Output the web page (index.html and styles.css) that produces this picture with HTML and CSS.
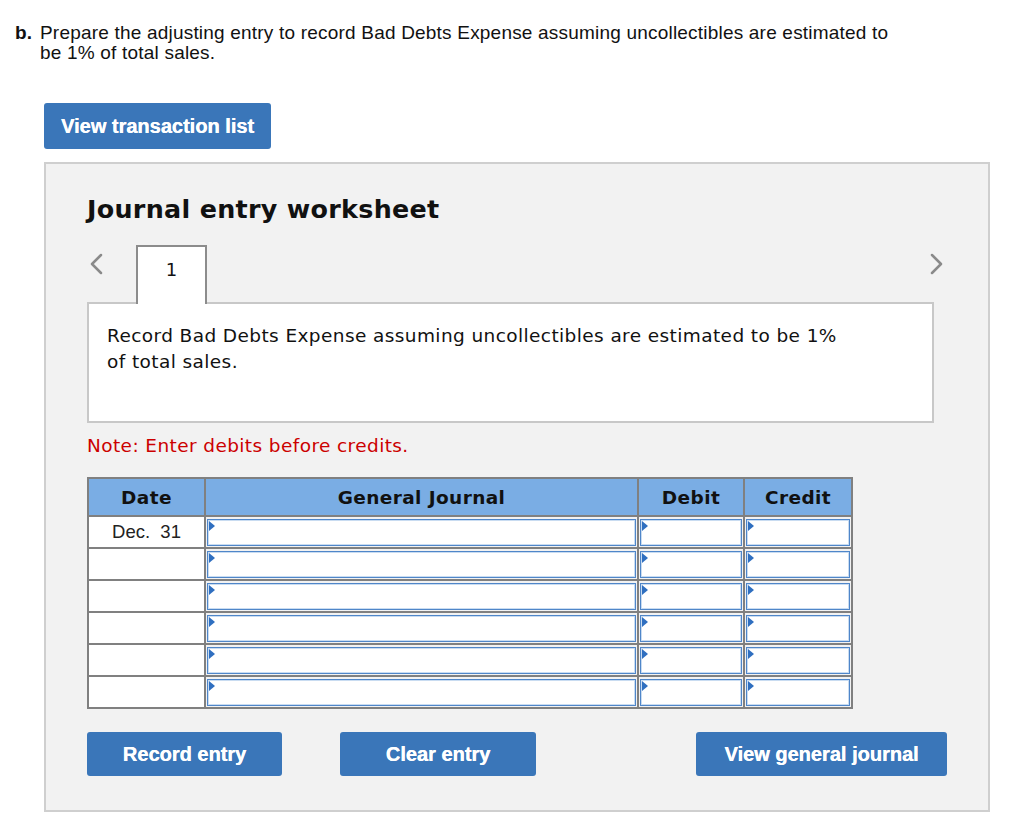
FILE: index.html
```html
<!DOCTYPE html>
<html lang="en">
<head>
    <meta charset="UTF-8">
    <meta name="viewport" content="width=device-width, initial-scale=1.0">
    <title>Journal entry worksheet</title>
    <link rel="stylesheet" href="styles.css">
</head>
<body>
    <div class="question">
        <span class="label">b.</span>
        <p>Prepare the adjusting entry to record Bad Debts Expense assuming uncollectibles are estimated to be 1% of total sales.</p>
    </div>

    <button class="btn btn-top">View transaction list</button>

    <div class="worksheet">
        <h2>Journal entry worksheet</h2>

        <div class="tabs">
            <span class="arrow">
                <svg width="16" height="22" viewBox="0 0 16 22"><path d="M13 2 L4 11 L13 20" fill="none" stroke="#8a8a8a" stroke-width="2.5" stroke-linecap="round" stroke-linejoin="round"/></svg>
            </span>
            <div class="tab">1</div>
            <span class="arrow arrow-right">
                <svg width="16" height="22" viewBox="0 0 16 22"><path d="M3 2 L12 11 L3 20" fill="none" stroke="#8a8a8a" stroke-width="2.5" stroke-linecap="round" stroke-linejoin="round"/></svg>
            </span>
        </div>

        <div class="instructions">
            Record Bad Debts Expense assuming uncollectibles are estimated to be 1%<br>of total sales.
        </div>

        <p class="note">Note: Enter debits before credits.</p>

        <table class="journal">
            <thead>
                <tr>
                    <th class="col-date">Date</th>
                    <th class="col-desc">General Journal</th>
                    <th class="col-amt">Debit</th>
                    <th class="col-amt2">Credit</th>
                </tr>
            </thead>
            <tbody id="rows"></tbody>
        </table>

        <div class="actions">
            <button class="btn btn-record">Record entry</button>
            <button class="btn btn-clear">Clear entry</button>
            <button class="btn btn-view">View general journal</button>
        </div>
    </div>

    <script>
        const rows = document.getElementById('rows');
        for (let i = 0; i < 6; i++) {
            const tr = document.createElement('tr');
            tr.innerHTML =
                '<td class="date">' + (i === 0 ? 'Dec.&nbsp; 31' : '') + '</td>' +
                '<td class="cell"><div class="field"></div></td>' +
                '<td class="cell"><div class="field"></div></td>' +
                '<td class="cell"><div class="field"></div></td>';
            rows.appendChild(tr);
        }
    </script>
</body>
</html>
```

FILE: styles.css
```css
body {
    margin: 0;
    padding: 0;
    background-color: #fff;
    font-family: "Liberation Sans", Arial, sans-serif;
    color: #111;
}
.question {
    display: flex;
    padding: 23px 0 0 15px;
    font-size: 19px;
    letter-spacing: 0.2px;
    line-height: 20px;
    width: 890px;
}
.question .label {
    font-weight: bold;
    width: 25px;
    flex-shrink: 0;
}
.question p {
    margin: 0;
}
.btn {
    background-color: #3a76b9;
    color: #fff;
    border: none;
    border-radius: 3px;
    font-family: "Liberation Sans", Arial, sans-serif;
    font-weight: bold;
    font-size: 20px;
    text-shadow: 0.3px 0 0 #fff;
    cursor: pointer;
    padding: 0;
}
.btn-top {
    display: block;
    margin: 40px 0 0 44px;
    width: 227px;
    height: 46px;
}
.worksheet {
    margin: 13px 0 0 44px;
    width: 946px;
    height: 650px;
    background-color: #f2f2f2;
    border: 2px solid #cfcfcf;
    padding: 0 0 0 41px;
    box-sizing: border-box;
    font-family: "DejaVu Sans", Verdana, sans-serif;
}
.worksheet h2 {
    margin: 0;
    padding-top: 30px;
    font-size: 25.4px;
    line-height: 30px;
    letter-spacing: 0.3px;
    color: #111;
}
.tabs {
    display: flex;
    align-items: flex-start;
    margin-top: 21px;
    width: 847px;
}
.arrow {
    margin: 8px 0 0 1px;
    width: 48px;
}
.arrow-right {
    margin-left: auto;
    width: auto;
    margin-right: -11px;
}
.tab {
    width: 71px;
    height: 59px;
    background-color: #fff;
    border: 2px solid #8c8c8c;
    border-bottom: none;
    box-sizing: border-box;
    text-align: center;
    font-size: 18px;
    padding-top: 12px;
    position: relative;
    z-index: 1;
    margin-bottom: -2px;
}
.instructions {
    width: 847px;
    height: 121px;
    box-sizing: border-box;
    background-color: #fff;
    border: 2px solid #c8c8c8;
    padding: 19px 18px;
    font-size: 18.5px;
    letter-spacing: 0.4px;
    line-height: 26px;
    color: #111;
}
.note {
    margin: 12px 0 0 0;
    color: #c00;
    font-size: 18.5px;
    letter-spacing: 0.4px;
    line-height: 22px;
}
.journal {
    margin-top: 20px;
    border-collapse: collapse;
    border: 2px solid #808080;
}
.journal th {
    background-color: #7aade4;
    border: 2px solid #808080;
    height: 36px;
    padding: 0;
    font-size: 18.5px;
    letter-spacing: 0.4px;
    font-weight: bold;
    color: #111;
}
.col-date { width: 115px; }
.col-desc { width: 431px; }
.col-amt { width: 104px; }
.col-amt2 { width: 106px; }
.journal td {
    border: 2px solid #808080;
    height: 28px;
    padding: 0;
    background-color: #fff;
}
.journal td.date {
    text-align: center;
    font-family: "Liberation Sans", Arial, sans-serif;
    font-size: 18.5px;
    color: #222;
}
.journal td.cell {
    padding: 1px;
    background-color: #f2f2f2;
}
.field {
    height: 27px;
    background-color: #fff;
    border: 1px solid #4f86c9;
    box-shadow: inset 0 0 0 1px #c9dcf1;
    box-sizing: border-box;
    position: relative;
}
.field::before {
    content: "";
    position: absolute;
    top: 1px;
    left: 1px;
    border-left: 6px solid #2f6fc0;
    border-top: 5px solid transparent;
    border-bottom: 5px solid transparent;
}
.actions {
    display: flex;
    margin-top: 23px;
    width: 860px;
}
.actions .btn {
    height: 44px;
}
.btn-record {
    width: 195px;
}
.btn-clear {
    width: 196px;
    margin-left: 58px;
}
.btn-view {
    width: 251px;
    margin-left: auto;
}
```
